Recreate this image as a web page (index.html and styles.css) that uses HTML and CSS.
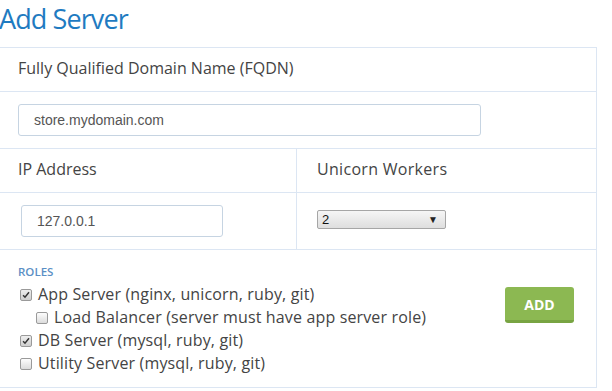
FILE: index.html
```html
<!DOCTYPE html>
<html>
<head>
<meta charset="utf-8">
<link rel="stylesheet" href="styles.css">
</head>
<body>
<h1 class="title">Add Server</h1>
<div class="panel">
  <div class="row head">Fully Qualified Domain Name (FQDN)</div>
  <div class="row field">
    <div class="input wide">store.mydomain.com</div>
  </div>
  <div class="row split">
    <div class="col left head">IP Address</div>
    <div class="col right head">Unicorn Workers</div>
  </div>
  <div class="row split">
    <div class="col left field">
      <div class="input ip">127.0.0.1</div>
    </div>
    <div class="col right field">
      <div class="select"><span>2</span><span class="arrow">▼</span></div>
    </div>
  </div>
  <div class="row roles">
    <div class="roles-list">
      <div class="roles-title">ROLES</div>
      <div class="check"><span class="box on"><svg viewBox="0 0 12 12" width="12" height="12"><path d="M2.5 6.2 L4.8 8.6 L9.6 2.8" fill="none" stroke="#333" stroke-width="1.8"/></svg></span>App Server (nginx, unicorn, ruby, git)</div>
      <div class="check sub"><span class="box"></span>Load Balancer (server must have app server role)</div>
      <div class="check"><span class="box on"><svg viewBox="0 0 12 12" width="12" height="12"><path d="M2.5 6.2 L4.8 8.6 L9.6 2.8" fill="none" stroke="#333" stroke-width="1.8"/></svg></span>DB Server (mysql, ruby, git)</div>
      <div class="check"><span class="box"></span>Utility Server (mysql, ruby, git)</div>
    </div>
    <div class="btn">ADD</div>
  </div>
</div>
</body>
</html>
```

FILE: styles.css
```css
html, body {
  margin: 0;
  padding: 0;
  background: #fff;
}
body {
  font-family: "Open Sans", "Noto Sans", sans-serif;
  color: #444;
}
.title {
  margin: 0;
  height: 47px;
  font-size: 27px;
  letter-spacing: -0.9px;
  font-weight: 400;
  line-height: 38px;
  color: #1f7bc1;
  margin-left: -1px;
}
.panel {
  width: 596px;
  border-top: 1px solid #dce6f3;
  border-right: 1px solid #dce6f3;
}
.row {
  border-bottom: 1px solid #dce6f3;
  box-sizing: border-box;
}
.head {
  height: 44px;
  display: flex;
  align-items: center;
  padding-left: 18px;
  font-size: 16px;
  box-sizing: border-box;
}
.row.head {
  height: 44px;
  padding-bottom: 3px;
}
.field {
  height: 57px;
  display: flex;
  align-items: center;
  padding-left: 18px;
  box-sizing: border-box;
}
.split {
  display: flex;
}
.split .col {
  box-sizing: border-box;
}
.split .left {
  width: 297px;
  border-right: 1px solid #dce6f3;
}
.split .right {
  padding-left: 20px;
  letter-spacing: 0.3px;
}
.split .col.head {
  height: 43px;
  padding-bottom: 3px;
}
.split .col.field {
  height: 56px;
}
.input {
  box-sizing: border-box;
  height: 32px;
  border: 1px solid #c6d4e2;
  border-radius: 3px;
  font-family: "Liberation Sans", Arial, sans-serif;
  font-size: 14px;
  color: #555;
  display: flex;
  align-items: center;
  padding-left: 15px;
  padding-bottom: 1px;
}
.input.wide {
  width: 463px;
}
.input.ip {
  width: 202px;
  margin-left: 3px;
}
.select {
  box-sizing: border-box;
  width: 129px;
  height: 19px;
  border: 1px solid #a6a6a6;
  border-radius: 2px;
  background: linear-gradient(#f6f6f6, #dedede);
  font-family: "Liberation Sans", Arial, sans-serif;
  font-size: 13px;
  letter-spacing: 0;
  color: #111;
  display: flex;
  justify-content: space-between;
  align-items: center;
  padding: 0 7px 0 4px;
  margin-top: -4px;
}
.select .arrow {
  font-size: 10px;
  color: #222;
}
.roles {
  height: 138px;
  display: flex;
  justify-content: space-between;
  align-items: flex-start;
  padding: 15px 22px 0 18px;
}
.roles-title {
  font-size: 11.5px;
  font-weight: 600;
  color: #5b8fc5;
  line-height: 14px;
  margin-bottom: 4px;
}
.check {
  display: flex;
  align-items: center;
  font-size: 16px;
  letter-spacing: 0.15px;
  line-height: 23px;
  height: 23px;
  color: #444;
  padding-left: 2px;
}
.check.sub {
  padding-left: 18px;
}
.box {
  box-sizing: border-box;
  width: 12px;
  height: 12px;
  border: 1px solid #9a9a9a;
  border-radius: 2px;
  background: linear-gradient(#fdfdfd, #dcdcdc);
  margin-right: 6px;
  display: flex;
  align-items: center;
  justify-content: center;
  flex-shrink: 0;
}
.box svg {
  display: block;
}
.box.on {
  background: linear-gradient(#eeeeee, #cfcfcf);
}
.btn {
  box-sizing: border-box;
  width: 69px;
  height: 36px;
  margin-top: 22px;
  background: #8cb852;
  border-bottom: 3px solid #78a442;
  border-radius: 3px;
  color: #fff;
  font-family: "Open Sans", sans-serif;
  font-weight: 700;
  font-size: 14px;
  letter-spacing: 0;
  display: flex;
  align-items: center;
  justify-content: center;
  padding-top: 2px;
}
```
